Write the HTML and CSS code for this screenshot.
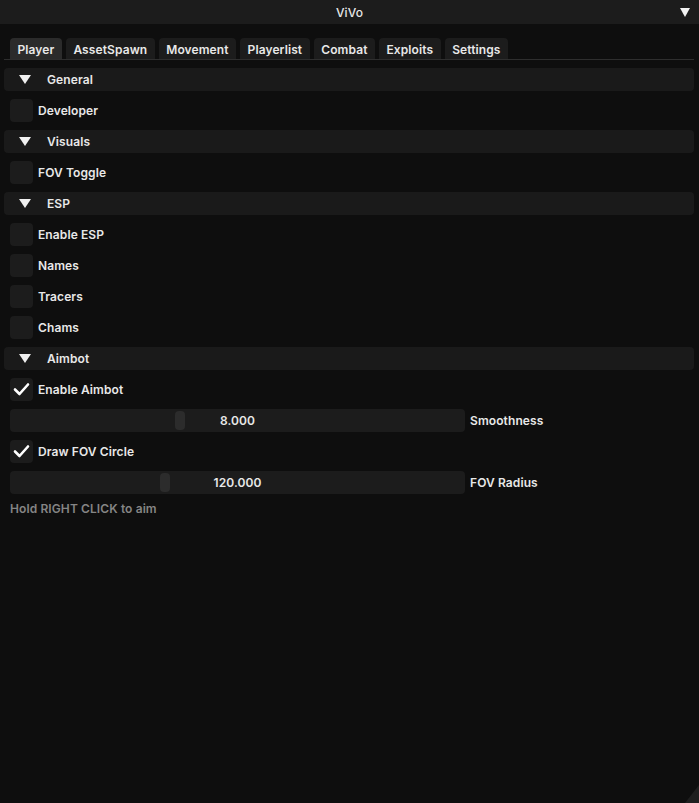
FILE: index.html
```html
<!DOCTYPE html>
<html lang="en">
<head>
    <meta charset="UTF-8">
    <meta name="viewport" content="width=device-width, initial-scale=1.0">
    <title>ViVo</title>
    <link rel="stylesheet" href="styles.css">
</head>
<body>
    <div class="window">
        <div class="titlebar">
            <span class="title">ViVo</span>
            <span class="collapse"></span>
        </div>

        <div class="content">
            <div class="tabbar">
                <div class="tab active">Player</div>
                <div class="tab">AssetSpawn</div>
                <div class="tab">Movement</div>
                <div class="tab">Playerlist</div>
                <div class="tab">Combat</div>
                <div class="tab">Exploits</div>
                <div class="tab">Settings</div>
            </div>

            <div class="header"><span class="arrow"></span>General</div>
            <div class="row"><span class="check"></span>Developer</div>

            <div class="header"><span class="arrow"></span>Visuals</div>
            <div class="row"><span class="check"></span>FOV Toggle</div>

            <div class="header"><span class="arrow"></span>ESP</div>
            <div class="row"><span class="check"></span>Enable ESP</div>
            <div class="row"><span class="check"></span>Names</div>
            <div class="row"><span class="check"></span>Tracers</div>
            <div class="row"><span class="check"></span>Chams</div>

            <div class="header"><span class="arrow"></span>Aimbot</div>
            <div class="row">
                <span class="check on">
                    <svg width="23" height="23" viewBox="0 0 23 23"><path d="M5 11.5 L9.5 16 L18 6.5" fill="none" stroke="#fff" stroke-width="2.6" stroke-linecap="round" stroke-linejoin="round"/></svg>
                </span>Enable Aimbot
            </div>
            <div class="row">
                <div class="slider"><span class="grab" style="left: 165px;"></span><span class="value">8.000</span></div>Smoothness
            </div>
            <div class="row">
                <span class="check on">
                    <svg width="23" height="23" viewBox="0 0 23 23"><path d="M5 11.5 L9.5 16 L18 6.5" fill="none" stroke="#fff" stroke-width="2.6" stroke-linecap="round" stroke-linejoin="round"/></svg>
                </span>Draw FOV Circle
            </div>
            <div class="row">
                <div class="slider"><span class="grab" style="left: 150px;"></span><span class="value">120.000</span></div>FOV Radius
            </div>
            <div class="hint">Hold RIGHT CLICK to aim</div>
        </div>
        <div class="grip"></div>
    </div>
</body>
</html>
```

FILE: styles.css
```css
body {
    margin: 0;
    background-color: #0e0e0e;
    font-family: "Inter", "Open Sans", sans-serif;
    font-weight: 600;
    font-size: 12px;
    letter-spacing: 0.1px;
    color: #e8e8e8;
}
.window {
    position: relative;
    width: 699px;
    height: 803px;
    overflow: hidden;
}
.titlebar {
    position: relative;
    height: 24px;
    background-color: #1c1c1c;
    display: flex;
    align-items: center;
    justify-content: center;
}
.title {
    font-weight: 500;
}
.collapse {
    position: absolute;
    right: 9px;
    top: 8px;
    width: 0;
    height: 0;
    border-left: 5px solid transparent;
    border-right: 5px solid transparent;
    border-top: 9px solid #f2f2f2;
}
.content {
    padding: 14px 5px 0 4px;
}
.tabbar {
    display: flex;
    gap: 4px;
    padding-left: 6px;
    border-bottom: 1px solid #2e2e2e;
    margin-bottom: 8px;
}
.tab {
    height: 21px;
    line-height: 23px;
    padding: 0 7.5px;
    background-color: #1c1c1c;
    border-radius: 4px 4px 0 0;
}
.tab.active {
    background-color: #2b2b2b;
}
.header {
    height: 23px;
    display: flex;
    align-items: center;
    background-color: #1a1a1a;
    border-radius: 4px;
    margin-bottom: 8px;
}
.arrow {
    width: 0;
    height: 0;
    margin: 0 16px 0 15px;
    border-left: 6px solid transparent;
    border-right: 6px solid transparent;
    border-top: 9px solid #f0f0f0;
}
.row {
    height: 23px;
    display: flex;
    align-items: center;
    padding-left: 6px;
    margin-bottom: 8px;
}
.check {
    width: 23px;
    height: 23px;
    border-radius: 4px;
    background-color: #1c1c1c;
    margin-right: 5px;
    flex: none;
}
.check svg {
    display: block;
}
.slider {
    position: relative;
    width: 455px;
    height: 23px;
    background-color: #1c1c1c;
    border-radius: 4px;
    margin-right: 5px;
    display: flex;
    align-items: center;
    justify-content: center;
}
.grab {
    position: absolute;
    top: 2px;
    width: 10px;
    height: 19px;
    border-radius: 4px;
    background-color: #2c2c2c;
}
.value {
    position: relative;
}
.hint {
    padding-left: 6px;
    color: #858585;
    margin-top: -1px;
}
.grip {
    position: absolute;
    right: 0;
    bottom: 0;
    width: 0;
    height: 0;
    border-left: 14px solid transparent;
    border-bottom: 18px solid #1e1e1e;
}
```
